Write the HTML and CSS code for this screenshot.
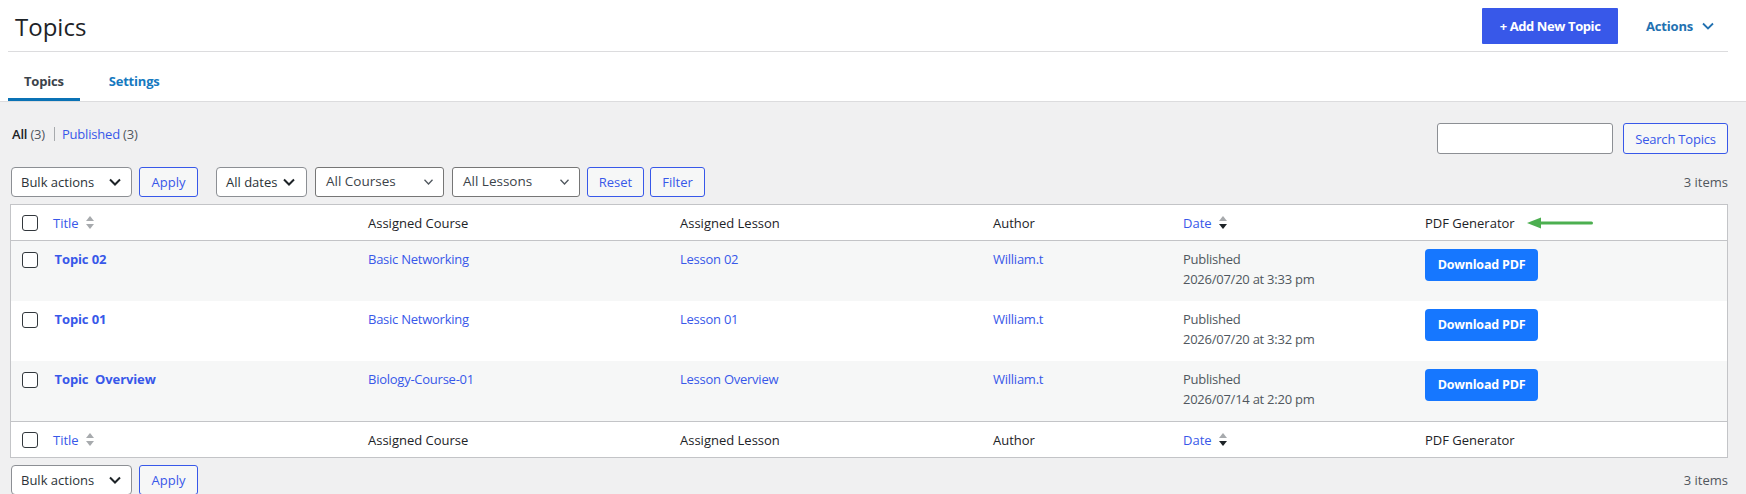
FILE: index.html
```html
<!DOCTYPE html>
<html lang="en">
<head>
<meta charset="utf-8">
<title>Topics</title>
<link rel="stylesheet" href="styles.css">
</head>
<body>
<header class="head">
  <div class="topbar">
    <h1 class="page-title">Topics</h1>
    <div class="top-actions">
      <a class="btn-add">+ Add New Topic</a>
      <a class="actions">Actions
        <svg class="actions-chev" width="12" height="8" viewBox="0 0 12 8"><polyline points="1,1.5 6,6.5 11,1.5" fill="none" stroke="#2271b1" stroke-width="1.8"/></svg>
      </a>
    </div>
  </div>
  <nav class="tabs">
    <a class="tab tab-active">Topics</a>
    <a class="tab">Settings</a>
  </nav>
</header>

<main class="content">
  <div class="row-top">
    <div class="subsub">
      <span class="current">All</span>&nbsp;<span class="count">(3)</span>
      <span class="sep"></span>
      <a class="link">Published</a>&nbsp;<span class="count">(3)</span>
    </div>
    <div class="search">
      <span class="search-input"></span>
      <span class="btn-outline btn-search">Search Topics</span>
    </div>
  </div>

  <div class="tablenav">
    <div class="controls">
      <span class="select sel-bulk"><span>Bulk actions</span><svg width="12" height="8" viewBox="0 0 12 8"><polyline points="1,1.5 6,6.5 11,1.5" fill="none" stroke="#1d2327" stroke-width="2"/></svg></span>
      <span class="btn-outline btn-apply">Apply</span>
      <span class="select sel-dates"><span>All dates</span><svg width="12" height="8" viewBox="0 0 12 8"><polyline points="1,1.5 6,6.5 11,1.5" fill="none" stroke="#1d2327" stroke-width="2"/></svg></span>
      <span class="select native sel-courses"><span>All Courses</span><svg width="9" height="6" viewBox="0 0 9 6"><polyline points="0.5,0.8 4.5,5 8.5,0.8" fill="none" stroke="#50575e" stroke-width="1.3"/></svg></span>
      <span class="select native sel-lessons"><span>All Lessons</span><svg width="9" height="6" viewBox="0 0 9 6"><polyline points="0.5,0.8 4.5,5 8.5,0.8" fill="none" stroke="#50575e" stroke-width="1.3"/></svg></span>
      <span class="btn-outline btn-reset">Reset</span>
      <span class="btn-outline btn-filter">Filter</span>
    </div>
    <span class="items">3 items</span>
  </div>

  <table class="list">
    <colgroup>
      <col class="c-check"><col class="c-title"><col class="c-course"><col class="c-lesson"><col class="c-author"><col class="c-date"><col class="c-pdf">
    </colgroup>
    <thead>
      <tr>
        <th class="check"><span class="cb"></span></th>
        <th><a class="link">Title</a><svg class="sort" width="8" height="14" viewBox="0 0 8 14"><polygon points="0,5 4,0 8,5" fill="#a7aaad"/><polygon points="0,8 8,8 4,13" fill="#a7aaad"/></svg></th>
        <th>Assigned Course</th>
        <th>Assigned Lesson</th>
        <th>Author</th>
        <th><a class="link">Date</a><svg class="sort" width="8" height="14" viewBox="0 0 8 14"><polygon points="0,5 4,0 8,5" fill="#a7aaad"/><polygon points="0,8 8,8 4,13" fill="#1d2327"/></svg></th>
        <th>PDF Generator<svg class="arrow" width="66" height="12" viewBox="0 0 66 12"><line x1="12" y1="6" x2="64.5" y2="6" stroke="#4caf50" stroke-width="3" stroke-linecap="round"/><polygon points="0,6 14,0.5 14,11.5" fill="#4caf50"/></svg></th>
      </tr>
    </thead>
    <tbody>
      <tr class="alt">
        <td class="check"><span class="cb"></span></td>
        <td><a class="row-title">Topic 02</a></td>
        <td><a class="link">Basic Networking</a></td>
        <td><a class="link">Lesson 02</a></td>
        <td><a class="link">William.t</a></td>
        <td class="date">Published<br>2026/07/20 at 3:33 pm</td>
        <td><span class="btn-pdf">Download PDF</span></td>
      </tr>
      <tr>
        <td class="check"><span class="cb"></span></td>
        <td><a class="row-title">Topic 01</a></td>
        <td><a class="link">Basic Networking</a></td>
        <td><a class="link">Lesson 01</a></td>
        <td><a class="link">William.t</a></td>
        <td class="date">Published<br>2026/07/20 at 3:32 pm</td>
        <td><span class="btn-pdf">Download PDF</span></td>
      </tr>
      <tr class="alt">
        <td class="check"><span class="cb"></span></td>
        <td><a class="row-title">Topic &nbsp;Overview</a></td>
        <td><a class="link">Biology-Course-01</a></td>
        <td><a class="link">Lesson Overview</a></td>
        <td><a class="link">William.t</a></td>
        <td class="date">Published<br>2026/07/14 at 2:20 pm</td>
        <td><span class="btn-pdf">Download PDF</span></td>
      </tr>
    </tbody>
    <tfoot>
      <tr>
        <th class="check"><span class="cb"></span></th>
        <th><a class="link">Title</a><svg class="sort" width="8" height="14" viewBox="0 0 8 14"><polygon points="0,5 4,0 8,5" fill="#a7aaad"/><polygon points="0,8 8,8 4,13" fill="#a7aaad"/></svg></th>
        <th>Assigned Course</th>
        <th>Assigned Lesson</th>
        <th>Author</th>
        <th><a class="link">Date</a><svg class="sort" width="8" height="14" viewBox="0 0 8 14"><polygon points="0,5 4,0 8,5" fill="#a7aaad"/><polygon points="0,8 8,8 4,13" fill="#1d2327"/></svg></th>
        <th>PDF Generator</th>
      </tr>
    </tfoot>
  </table>

  <div class="tablenav tablenav-bottom">
    <div class="controls">
      <span class="select sel-bulk"><span>Bulk actions</span><svg width="12" height="8" viewBox="0 0 12 8"><polyline points="1,1.5 6,6.5 11,1.5" fill="none" stroke="#1d2327" stroke-width="2"/></svg></span>
      <span class="btn-outline btn-apply">Apply</span>
    </div>
    <span class="items">3 items</span>
  </div>
</main>
</body>
</html>
```

FILE: styles.css
```css
html, body {
  margin: 0;
  padding: 0;
  overflow: hidden;
}
body {
  background: #f0f0f1;
  font-family: "Open Sans", "Liberation Sans", sans-serif;
  font-size: 13px;
  line-height: 20px;
  color: #1d2327;
}
a { text-decoration: none; }

/* ---------- header ---------- */
.head {
  background: #fff;
  border-bottom: 1px solid #dcdcde;
}
.topbar {
  margin: 0 18px 0 8px;
  height: 51px;
  border-bottom: 1px solid #dcdcde;
  display: flex;
  align-items: flex-start;
  justify-content: space-between;
}
.page-title {
  margin: 11px 0 0 7px;
  font-size: 24px;
  line-height: 32px;
  font-weight: 400;
  color: #1d2327;
}
.top-actions {
  display: flex;
  align-items: center;
  margin-top: 8px;
}
.btn-add {
  display: flex;
  align-items: center;
  justify-content: center;
  width: 136px;
  height: 36px;
  background: #3858e9;
  color: #fff;
  font-weight: 700;
  font-size: 13px;
  letter-spacing: -0.4px;
  border-radius: 1px;
}
.actions {
  display: flex;
  align-items: center;
  margin: 0 14px 0 28px;
  color: #2271b1;
  font-weight: 700;
  font-size: 13px;
  letter-spacing: -0.2px;
}
.actions-chev { margin-left: 9px; }

.tabs {
  display: flex;
  gap: 13px;
  margin-left: 8px;
}
.tab {
  padding: 19px 16px 7px;
  line-height: 20px;
  font-weight: 700;
  font-size: 13px;
  letter-spacing: -0.2px;
  color: #1679c0;
  border-bottom: 3px solid transparent;
}
.tab-active {
  color: #3c434a;
  border-bottom-color: #0a72b5;
}

/* ---------- content ---------- */
.content {
  padding: 21px 18px 0 10px;
}
.row-top {
  display: flex;
  align-items: flex-start;
  justify-content: space-between;
}
.subsub {
  margin: 1px 0 0 2px;
  display: flex;
  align-items: center;
  color: #1d2327;
  letter-spacing: -0.2px;
}
.current { font-weight: 600; }
.count { color: #50575e; }
.sep {
  display: inline-block;
  width: 1px;
  height: 14px;
  background: #a7aaad;
  margin: 0 7px 0 9px;
}
.link { color: #3858e9; }

.search {
  display: flex;
  gap: 10px;
}
.search-input {
  display: block;
  width: 176px;
  height: 31px;
  box-sizing: border-box;
  border: 1px solid #8c8f94;
  border-radius: 3px;
  background: #fff;
}
.btn-outline {
  display: flex;
  align-items: center;
  justify-content: center;
  box-sizing: border-box;
  height: 30px;
  border: 1px solid #3858e9;
  border-radius: 3px;
  background: #f6f7f7;
  color: #3858e9;
}
.btn-search { width: 105px; height: 31px; letter-spacing: -0.2px; }

.tablenav {
  margin-top: 13px;
  height: 30px;
  display: flex;
  align-items: center;
  justify-content: space-between;
}
.tablenav-bottom { margin-top: 7px; }
.controls {
  display: flex;
  gap: 7px;
  padding-left: 1px;
}
.items { color: #50575e; margin-top: -1px; }

.select {
  display: flex;
  align-items: center;
  justify-content: space-between;
  box-sizing: border-box;
  height: 30px;
  padding: 0 10px 0 9px;
  border: 1px solid #8c8f94;
  border-radius: 4px;
  background: #fff;
  color: #2c3338;
}
.select.native {
  border-color: #767676;
  border-radius: 3px;
  color: #3c434a;
  padding: 0 10px 0 10px;
  font-size: 13.5px;
}
.select.native span { margin-top: -2px; }
.sel-bulk { width: 121px; }
.btn-apply { width: 59px; }
.sel-dates { width: 91px; margin-left: 11px; padding-right: 11px; }
.sel-courses { width: 129px; margin-left: 1px; }
.sel-lessons { width: 128px; margin-left: 1px; }
.btn-reset { width: 57px; }
.btn-filter { width: 55px; margin-left: -1px; }

/* ---------- table ---------- */
.list {
  width: 100%;
  table-layout: fixed;
  border-collapse: separate;
  border-spacing: 0;
  border: 1px solid #c3c4c7;
  background: #fff;
  margin-top: 7px;
}
.c-check { width: 33px; }
.c-title { width: 314px; }
.c-course { width: 312px; }
.c-lesson { width: 313px; }
.c-author { width: 190px; }
.c-date { width: 242px; }
.c-pdf { width: 312px; }

.list th {
  text-align: left;
  font-weight: 400;
  padding: 8px 10px 7px;
  line-height: 20px;
  color: #1d2327;
  white-space: nowrap;
}
.list th:nth-child(2) { padding-left: 9px; }
.list thead th { border-bottom: 1px solid #c3c4c7; }
.list tfoot th { border-top: 1px solid #c3c4c7; }
.list th.check {
  padding: 10px 0 0 11px;
  vertical-align: top;
}
.list td {
  padding: 8px 10px;
  vertical-align: top;
  line-height: 20px;
  letter-spacing: -0.25px;
}
.list td.check { padding: 11px 0 0 11px; }
.list tbody tr { height: 60px; }
.list tr.alt td { background: #f6f7f7; }

.cb {
  display: block;
  width: 16px;
  height: 16px;
  box-sizing: border-box;
  border: 1px solid #32373c;
  border-radius: 3px;
  background: #fff;
}
.sort {
  margin-left: 7px;
  vertical-align: -2px;
}
.arrow {
  margin-left: 12px;
  vertical-align: -1px;
}
.row-title {
  display: inline-block;
  margin-left: 0.5px;
  color: #3858e9;
  font-weight: 700;
  font-size: 13px;
  letter-spacing: -0.1px;
}
.date { color: #50575e; }
.btn-pdf {
  display: flex;
  align-items: center;
  justify-content: center;
  width: 113px;
  height: 32px;
  background: #1677ff;
  color: #fff;
  border-radius: 4px;
  font-weight: 700;
  font-size: 12.5px;
  letter-spacing: -0.2px;
}
```
